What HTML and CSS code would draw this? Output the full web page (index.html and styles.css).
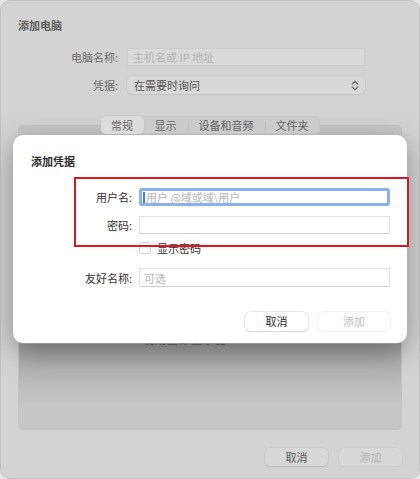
FILE: index.html
```html
<!DOCTYPE html>
<html lang="zh-CN">

<head>
    <meta charset="UTF-8">
    <meta name="viewport" content="width=device-width, initial-scale=1.0">
    <title>添加电脑</title>
    <link rel="stylesheet" href="styles.css">
</head>

<body>
    <!-- 背后的窗口（被遮罩变暗） -->
    <div class="window">
        <div class="win-title">添加电脑</div>
        <div class="win-form">
            <label class="win-label">电脑名称:</label>
            <div class="win-input placeholder">主机名或 IP 地址</div>
            <label class="win-label">凭据:</label>
            <div class="win-select">
                <span>在需要时询问</span>
                <svg class="chevron" width="8" height="11" viewBox="0 0 8 11">
                    <path d="M1.2 4 L4 1.3 L6.8 4 M1.2 7 L4 9.7 L6.8 7" fill="none" stroke="#707070" stroke-width="1.3" stroke-linecap="round" stroke-linejoin="round" />
                </svg>
            </div>
        </div>
        <div class="tabs">
            <div class="tab active">常规</div>
            <div class="tab">显示</div>
            <div class="tab sep">设备和音频</div>
            <div class="tab sep">文件夹</div>
        </div>
        <div class="tab-box">
            <div class="tab-text">使用全部显示器</div>
        </div>
        <div class="win-buttons">
            <div class="win-btn">取消</div>
            <div class="win-btn disabled">添加</div>
        </div>
    </div>

    <!-- 弹出的表单 -->
    <div class="sheet">
        <div class="sheet-title">添加凭据</div>
        <div class="sheet-form">
            <label class="label" for="username">用户名:</label>
            <div class="focus-field">
                <span class="caret"></span>
                <input type="text" id="username" class="bare-input" placeholder="用户 @域或域\用户">
            </div>
            <label class="label" for="password">密码:</label>
            <input type="password" id="password" class="field">
            <div></div>
            <div class="check-row">
                <span class="checkbox"></span>
                <span>显示密码</span>
            </div>
            <label class="label label-wide" for="nickname">友好名称:</label>
            <input type="text" id="nickname" class="field field-tall" placeholder="可选">
        </div>
        <div class="sheet-buttons">
            <div class="btn">取消</div>
            <div class="btn btn-add disabled">添加</div>
        </div>
    </div>

    <!-- 红色标注框 -->
    <div class="mark"></div>
</body>

</html>
```

FILE: styles.css
```css
* {
    box-sizing: border-box;
    margin: 0;
    padding: 0;
}

body {
    width: 420px;
    height: 479px;
    overflow: hidden;
    background: #e6e6e6;
    font-family: "Noto Sans CJK SC", "Liberation Sans", sans-serif;
    font-size: 11px;
    position: relative;
}

/* 背后窗口 */
.window {
    width: 420px;
    height: 479px;
    background: #d3d3d3;
    border: 1px solid #c2c2c2;
    border-radius: 10px;
    display: flex;
    flex-direction: column;
}

.win-title {
    padding: 17px 0 0 17px;
    line-height: 14px;
    font-size: 11px;
    font-weight: 700;
    color: #5f5f5f;
}

.win-form {
    display: grid;
    grid-template-columns: 117px 238px;
    column-gap: 9px;
    row-gap: 10px;
    margin-top: 16px;
    align-items: center;
}

.win-label {
    text-align: right;
    color: #6b6b6b;
    font-size: 11px;
}

.win-input {
    height: 18px;
    line-height: 16px;
    background: #d9d9d9;
    border: 1px solid #cdcdcd;
    padding-left: 5px;
    color: #b3b3b3;
    font-size: 11px;
}

.win-select {
    height: 18px;
    border-radius: 5px;
    background: #d8d8d8;
    box-shadow: 0 0 0 0.5px #c3c3c3, 0 1px 1px rgba(0, 0, 0, .08);
    display: flex;
    align-items: center;
    justify-content: space-between;
    padding: 0 6px 0 7px;
    color: #555;
    font-size: 11px;
}

.tabs {
    align-self: center;
    display: flex;
    margin-top: 22px;
    height: 18px;
    background: #cbcbcb;
    border-radius: 5px;
    box-shadow: inset 0 0 0 0.5px #c2c2c2;
    position: relative;
    z-index: 1;
}

.tab {
    padding: 0 11px;
    line-height: 18px;
    color: #646464;
    font-size: 11px;
    position: relative;
}

.tab.active {
    width: 43px;
    text-align: center;
    padding: 0;
    background: #dcdcdc;
    border-radius: 5px;
    box-shadow: 0 0 0 0.5px #c2c2c2, 0 1px 1px rgba(0, 0, 0, .1);
}

.tab.sep::before {
    content: "";
    position: absolute;
    left: 0;
    top: 5px;
    width: 1px;
    height: 9px;
    background: #bdbdbd;
}

.tab-box {
    margin: -9px 17px 0 17px;
    height: 305px;
    background: linear-gradient(#c9c9c9 0, #a2a2a2 219px, #b4b4b4 245px, #c6c6c6 280px);
    border: 1px solid #c3c3c3;
    border-radius: 5px;
}

.tab-text {
    margin: 205px 0 0 124px;
    color: #5e5e5e;
    font-size: 11px;
    letter-spacing: 1px;
}

.win-buttons {
    display: flex;
    justify-content: flex-end;
    gap: 11px;
    margin: 18px 17px 0 0;
}

.win-btn {
    width: 63px;
    height: 18px;
    line-height: 18px;
    text-align: center;
    background: #d8d8d8;
    border-radius: 5px;
    box-shadow: 0 0 0 0.5px #c0c0c0, 0 1px 1px rgba(0, 0, 0, .12);
    color: #5a5a5a;
    font-size: 11px;
}

.win-btn.disabled {
    color: #b5b5b5;
    box-shadow: 0 0 0 0.5px #c8c8c8;
}

/* 弹出表单 */
.sheet {
    position: absolute;
    left: 13px;
    top: 135px;
    width: 394px;
    height: 208px;
    background: #fff;
    border-radius: 10px;
    box-shadow: 0 0 0 0.5px #b5b5b5, 0 8px 28px rgba(0, 0, 0, .35);
    padding: 19px 17px 0 18px;
}

.sheet-title {
    line-height: 14px;
    font-size: 11px;
    font-weight: 700;
    color: #2b2b2b;
}

.sheet-form {
    display: grid;
    grid-template-columns: 1fr 251px;
    column-gap: 7px;
    margin-top: 20px;
    align-items: center;
}

.label {
    text-align: right;
    color: #333;
    font-size: 11px;
}

.focus-field {
    height: 18px;
    border: 3px solid #8cb1f1;
    border-radius: 3px;
    display: flex;
    align-items: center;
    padding-left: 1px;
}

.caret {
    width: 2px;
    height: 11px;
    background: #3d7ff0;
    margin-right: 1px;
}

.bare-input {
    border: none;
    outline: none;
    flex: 1;
    font-family: inherit;
    font-size: 11px;
    background: transparent;
}

.bare-input::placeholder,
.field::placeholder {
    color: #b5b5b5;
}

.field {
    height: 18px;
    border: 1px solid #e3e3e3;
    border-bottom-color: #cfcfcf;
    outline: none;
    padding-left: 4px;
    font-family: inherit;
    font-size: 11px;
}

#password {
    margin-top: 10px;
}

.sheet-form .label:nth-of-type(2) {
    margin-top: 10px;
}

.check-row {
    display: flex;
    align-items: center;
    gap: 6px;
    margin-top: 8px;
    height: 12px;
    color: #333;
    font-size: 11px;
}

.checkbox {
    width: 12px;
    height: 12px;
    border: 1px solid #cfcfcf;
    border-radius: 3px;
    background: #fff;
}

.label-wide,
.field-tall {
    margin-top: 14px;
}

.field-tall {
    height: 19px;
}

.sheet-buttons {
    display: flex;
    justify-content: flex-end;
    gap: 10px;
    margin-top: 25px;
}

.btn {
    width: 63px;
    height: 19px;
    line-height: 19px;
    text-align: center;
    background: #fff;
    border-radius: 5px;
    box-shadow: 0 0 0 0.5px #cfcfcf, 0 1px 1px rgba(0, 0, 0, .12);
    color: #2b2b2b;
    font-size: 11px;
}

.btn-add {
    width: 72px;
}

.btn.disabled {
    color: #bdbdbd;
    box-shadow: 0 0 0 0.5px #e2e2e2;
}

/* 红色标注 */
.mark {
    position: absolute;
    left: 74px;
    top: 177px;
    width: 335px;
    height: 70px;
    border: 2px solid #e0151e;
}
```
